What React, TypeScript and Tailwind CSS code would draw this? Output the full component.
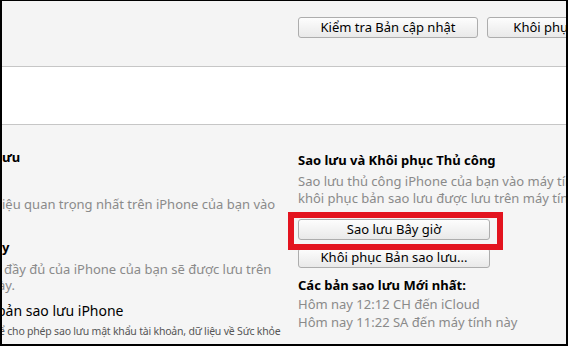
import React from "react";

const font = { fontFamily: '"Noto Sans", "Open Sans", sans-serif' };

const Btn = ({ label, className = "" }: { label: string; className?: string }) => (
  <div
    className={`flex items-center justify-center shrink-0 rounded-[3px] border border-[#adadad] bg-gradient-to-b from-[#fdfdfd] to-[#e9e9e9] text-[13px] text-black ${className}`}
  >
    <span className="whitespace-nowrap">{label}</span>
  </div>
);

export default function App() {
  return (
    <div
      style={font}
      className="w-[568px] h-[346px] overflow-hidden border-l-2 border-t border-r-2 border-b-2 border-black bg-[#f5f5f5] flex flex-col"
    >
      {/* Toolbar */}
      <div className="h-[66px] shrink-0 bg-[#f4f4f4] border-b border-[#c6c6c6] flex items-start pt-[16px] pl-[296px] gap-[9px] overflow-hidden">
        <Btn label="Kiểm tra Bản cập nhật" className="w-[180px] h-[21px]" />
        <Btn label="Khôi phục iPhone..." className="w-[170px] h-[21px]" />
      </div>

      {/* White strip */}
      <div className="h-[58px] shrink-0 bg-white border-b border-[#c6c6c6]" />

      {/* Backups panel */}
      <div className="flex flex-1 overflow-hidden">
        {/* Left column (scrolled off) */}
        <div className="w-[296px] shrink-0 overflow-hidden text-[13px] whitespace-nowrap">
          <div className="mt-[24px] leading-[17px] font-bold text-black">ưu</div>
          <div className="mt-[30px] leading-[17px] text-[#8a8a8a]">iệu quan trọng nhất trên iPhone của bạn vào</div>
          <div className="mt-[26px] leading-[17px] font-bold text-black">y</div>
          <div className="mt-[5px] leading-[16px] text-[#8a8a8a]">
            <div className="ml-[2px]">đầy đủ của iPhone của bạn sẽ được lưu trên</div>
            <div className="-ml-[4px]">ày.</div>
          </div>
          <div className="mt-[9px] leading-[18px] text-[14px] text-black -ml-[5px]">bản sao lưu iPhone</div>
          <div className="mt-[4px] leading-[14px] text-[10.5px] tracking-[-0.2px] text-[#555] -ml-[3px]">
            ể cho phép sao lưu mật khẩu tài khoản, dữ liệu về Sức khỏe
          </div>
        </div>

        {/* Right column */}
        <div className="flex-1 flex flex-col text-[13px] whitespace-nowrap">
          <div className="mt-[27px] leading-[17px] font-bold text-black">Sao lưu và Khôi phục Thủ công</div>
          <div className="mt-[4px] leading-[17px] text-[#8a8a8a]">
            <div>Sao lưu thủ công iPhone của bạn vào máy tính này hoặc</div>
            <div>khôi phục bản sao lưu được lưu trên máy tính này.</div>
          </div>
          <div className="relative mt-[12px] w-[192px]">
            <Btn label="Sao lưu Bây giờ" className="w-[192px] h-[21px]" />
            <div className="absolute left-[-10px] top-[-7px] w-[215px] h-[38px] border-[6px] border-[#e3141f]" />
          </div>
          <Btn label="Khôi phục Bản sao lưu..." className="mt-[8px] w-[192px] h-[20px]" />
          <div className="mt-[9px] leading-[17px] font-bold text-black">Các bản sao lưu Mới nhất:</div>
          <div className="mt-[1px] leading-[18px] text-[#8a8a8a]">
            <div>Hôm nay 12:12 CH đến iCloud</div>
            <div>Hôm nay 11:22 SA đến máy tính này</div>
          </div>
        </div>
      </div>
    </div>
  );
}
